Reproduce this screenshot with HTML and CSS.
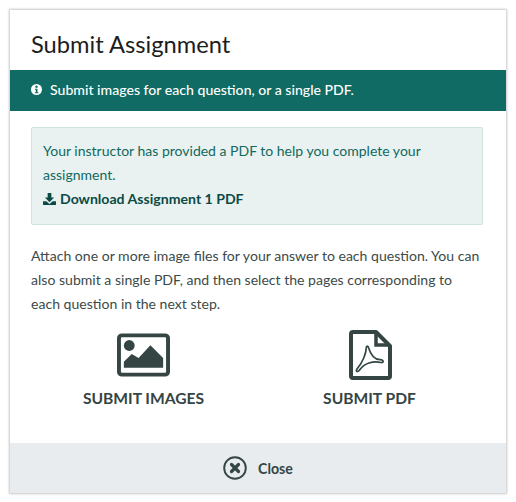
FILE: index.html
```html
<!DOCTYPE html>
<html lang="en">
<head>
<meta charset="utf-8">
<title>Submit Assignment</title>
<link rel="stylesheet" href="styles.css">
</head>
<body>
<div class="modal">
  <header class="modal-header"><h1>Submit Assignment</h1></header>
  <div class="banner">
    <svg class="banner-icon" viewBox="0 0 24 24"><circle cx="12" cy="12" r="12" fill="#fff"/><circle cx="12" cy="6" r="2.6" fill="#0f6b64"/><path d="M8.5 10.2h5.6v7.6h2v2.6H8.5v-2.6h2v-5H8.5z" fill="#0f6b64"/></svg>
    <span>Submit images for each question, or a single PDF.</span>
  </div>
  <main class="modal-body">
    <div class="alert">
      <p>Your instructor has provided a PDF to help you complete your assignment.</p>
      <a class="download" href="#">
        <svg class="download-icon" viewBox="0 0 14 13"><path d="M5 0h4v5h3L7 10 2 5h3z" fill="#0c4a45"/><path d="M0 9h3.5L7 11.8 10.5 9H14v4H0z" fill="#0c4a45"/></svg>
        Download Assignment 1 PDF</a>
    </div>
    <p class="intro">Attach one or more image files for your answer to each question. You can also submit a single PDF, and then select the pages corresponding to each question in the next step.</p>
    <div class="options">
      <div class="option">
        <svg class="option-icon image-icon" viewBox="0 0 54 44"><rect x="2" y="2" width="50" height="40" rx="3" fill="none" stroke="#344543" stroke-width="4"/><circle cx="12.500" cy="12.300" r="5.500" fill="#344543"/><path d="M7 35v-6l8-8 7 4L34 12l13 13v10z" fill="#344543"/></svg>
        <span>SUBMIT IMAGES</span>
      </div>
      <div class="option">
        <svg class="option-icon pdf-icon" viewBox="0 0 44 50"><path d="M5 2h23l14 14v30a2 2 0 0 1-2 2H5a2 2 0 0 1-2-2V4a2 2 0 0 1 2-2z" fill="none" stroke="#344543" stroke-width="4" stroke-linejoin="round"/><path d="M28 3v12h13" fill="none" stroke="#344543" stroke-width="3.500"/><path d="M18.500 16.500C18 24 14 33 9 39c-2 3 1 3.500 3 .5 4-6 13-9 21-7 3 .5 3-2.500-1-2.800-5-.2-9-3.700-11.500-12.200-.3-1.500-1.400-1.500-1.500-1z" fill="none" stroke="#344543" stroke-width="1.700" stroke-linejoin="round"/></svg>
        <span>SUBMIT PDF</span>
      </div>
    </div>
  </main>
  <footer class="modal-footer">
    <svg class="close-icon" viewBox="0 0 24 24"><circle cx="12" cy="12" r="10.800" fill="none" stroke="#344543" stroke-width="1.900"/><path d="M8.500 8.500l7 7M15.500 8.500l-7 7" stroke="#344543" stroke-width="3.200" stroke-linecap="round"/></svg>
    <span>Close</span>
  </footer>
</div>
</body>
</html>
```
FILE: styles.css
```css
* { box-sizing: border-box; }
html, body { margin: 0; background: #fff; }
body {
  padding: 10px 10px 8px;
  font-family: Lato, "Open Sans", sans-serif;
  color: #3d4a48;
}
.modal {
  width: 496px;
  height: 483px;
  display: flex;
  flex-direction: column;
  background: #fff;
  box-shadow: 0 0 2px 1px #c8c8c8;
}
.modal-header {
  height: 60px;
  padding: 8px 21px 0;
  display: flex;
  align-items: center;
}
h1 {
  margin: 0;
  font-size: 23.7px;
  font-weight: 400;
  color: #1d1d1d;
}
.banner {
  height: 41px;
  padding: 0 21px 2px;
  display: flex;
  align-items: center;
  gap: 8px;
  background: #0f6b64;
  color: #fff;
  font-size: 14.1px;
  font-weight: 500;
}
.banner-icon { width: 11px; height: 11px; }
.modal-body {
  flex: 1;
  padding: 16px 23px 0 21px;
}
.alert {
  height: 98px;
  padding: 11px;
  background: #e9f2f1;
  border: 1px solid #cfe3e0;
  border-radius: 2px;
  color: #10695f;
  font-size: 14px;
  line-height: 24px;
}
.alert p { margin: 0; }
.download {
  display: flex;
  align-items: center;
  gap: 4px;
  color: #0c4a45;
  font-size: 14.1px;
  font-weight: 700;
  text-decoration: none;
}
.download-icon { width: 13px; height: 12px; }
.intro {
  margin: 19px 0 0;
  font-size: 14.07px;
  line-height: 24px;
}
.options {
  display: grid;
  grid-template-columns: 225px 227px;
  margin-top: 14px;
}
.option {
  display: flex;
  flex-direction: column;
  align-items: center;
  gap: 9px;
  font-size: 15.6px;
  font-weight: 700;
  color: #344543;
}
.option-icon { height: 50px; }
.image-icon { width: 53px; height: 44px; margin-top: 3px; margin-bottom: 3px; }
.pdf-icon { width: 44px; }
.modal-footer {
  height: 50px;
  display: flex;
  align-items: center;
  justify-content: center;
  gap: 11px;
  background: #e9ecef;
  font-size: 14.2px;
  font-weight: 700;
  color: #344543;
}
.close-icon { width: 24px; height: 24px; }
```
